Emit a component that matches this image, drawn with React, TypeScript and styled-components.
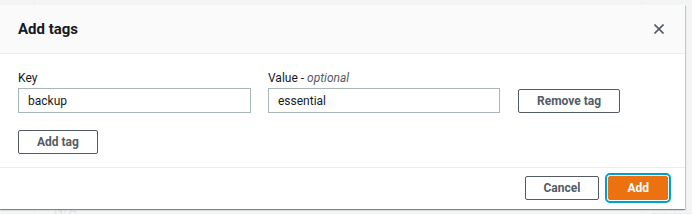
import styled, { createGlobalStyle } from "styled-components";

const GlobalStyle = createGlobalStyle`
  html, body {
    margin: 0;
    padding: 0;
  }
  body {
    font-family: Roboto, "Liberation Sans", Arial, sans-serif;
    background: #ffffff;
    color: #16191f;
  }
`;

const Page = styled.div`
  position: relative;
  width: 692px;
  height: 214px;
  overflow: hidden;
  background: #ffffff;
`;

// content of the page behind the modal, mostly hidden
const Behind = styled.div`
  display: flex;
  height: 100%;
  padding-left: 34px;
  box-sizing: border-box;
  font-size: 13px;
  color: #545b64;
`;

const BehindColumn = styled.div`
  flex: 1;
  border-left: 1px solid #d5dbdb;
  padding: 202px 0 0 19px;
`;

const BehindSide = styled.div`
  width: 42px;
  display: flex;
  flex-direction: column;
  gap: 8px;
  padding-top: 76px;
  border-left: 1px solid #d5dbdb;
  padding-left: 8px;
  white-space: nowrap;
`;

const Overlay = styled.div`
  position: absolute;
  inset: 0;
  background: rgba(242, 243, 243, 0.9);
`;

const Modal = styled.div`
  position: absolute;
  top: 5px;
  left: 0;
  width: 685px;
  background: #ffffff;
  box-shadow: 0 1px 1px 0 rgba(0, 28, 36, 0.3), 1px 1px 1px 0 rgba(0, 28, 36, 0.15),
    -1px 1px 1px 0 rgba(0, 28, 36, 0.15);
`;

const Header = styled.div`
  display: flex;
  align-items: center;
  justify-content: space-between;
  height: 48px;
  padding: 0 21px 0 18px;
  background: #fafafa;
  border-bottom: 1px solid #eaeded;
`;

const Title = styled.h2`
  margin: 0;
  font-size: 15px;
  font-weight: 700;
  color: #16191f;
`;

const CloseButton = styled.button`
  display: flex;
  align-items: center;
  justify-content: center;
  width: 10px;
  height: 10px;
  padding: 0;
  border: none;
  background: none;
  color: #545b64;
  cursor: pointer;
`;

const Body = styled.div`
  padding: 14px 18px 13px;
`;

const TagRow = styled.div`
  display: grid;
  grid-template-columns: 233px 232px auto;
  column-gap: 17px;
  align-items: end;
`;

const Field = styled.div`
  display: flex;
  flex-direction: column;
`;

const Label = styled.label`
  font-size: 12px;
  line-height: 20px;
  height: 20px;
  color: #16191f;
`;

const Optional = styled.i`
  color: #545b64;
`;

const Input = styled.input`
  box-sizing: border-box;
  height: 25px;
  width: 100%;
  padding: 0 9px;
  border: 1px solid #aab7b8;
  border-radius: 0;
  font-family: inherit;
  font-size: 12px;
  color: #16191f;
  background: #ffffff;
  outline: none;
`;

const Button = styled.button<{ $primary?: boolean; $focused?: boolean }>`
  box-sizing: border-box;
  height: 24px;
  padding: 0 18px;
  border: 1px solid ${(p) => (p.$primary ? "#ec7211" : "#545b64")};
  border-radius: 2px;
  background: ${(p) => (p.$primary ? "#ec7211" : "#ffffff")};
  color: ${(p) => (p.$primary ? "#ffffff" : "#545b64")};
  font-family: inherit;
  font-size: 12px;
  font-weight: 700;
  cursor: pointer;
  justify-self: start;
  margin-left: 1px;
  ${(p) => (p.$focused ? "outline: 2px solid #00a1c9; outline-offset: 1px;" : "")}
`;

const AddTagRow = styled.div`
  margin-top: 17px;
`;

const Footer = styled.div`
  display: flex;
  justify-content: flex-end;
  gap: 8px;
  padding: 8px 17px 9px;
  border-top: 1px solid #eaeded;
`;

const CloseIcon = () => (
  <svg width="10" height="10" viewBox="0 0 10 10" fill="none">
    <path d="M0.5 0.5 L9.5 9.5 M9.5 0.5 L0.5 9.5" stroke="currentColor" strokeWidth="1.6" />
  </svg>
);

export default function App() {
  return (
    <Page>
      <GlobalStyle />
      <Behind>
        <BehindColumn>N/A</BehindColumn>
        <BehindSide>
          <span>I</span>
          <span>s/</span>
          <span>IT</span>
          <span style={{ marginTop: 40 }}>e</span>
          <span>arn:aws:</span>
        </BehindSide>
      </Behind>
      <Overlay />
      <Modal>
        <Header>
          <Title>Add tags</Title>
          <CloseButton aria-label="Close">
            <CloseIcon />
          </CloseButton>
        </Header>
        <Body>
          <TagRow>
            <Field>
              <Label>Key</Label>
              <Input defaultValue="backup" />
            </Field>
            <Field>
              <Label>
                Value - <Optional>optional</Optional>
              </Label>
              <Input defaultValue="essential" />
            </Field>
            <Button>Remove tag</Button>
          </TagRow>
          <AddTagRow>
            <Button style={{ marginLeft: 0 }}>Add tag</Button>
          </AddTagRow>
        </Body>
        <Footer>
          <Button>Cancel</Button>
          <Button $primary $focused>
            Add
          </Button>
        </Footer>
      </Modal>
    </Page>
  );
}
